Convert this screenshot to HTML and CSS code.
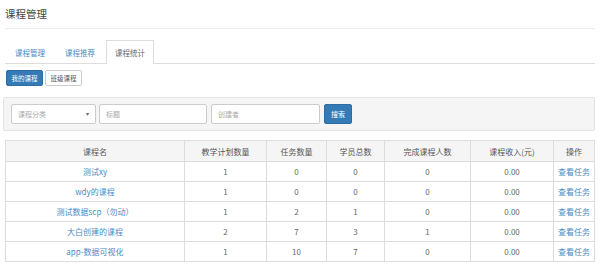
FILE: index.html
```html
<!DOCTYPE html>
<html lang="zh-CN">
<head>
    <meta charset="UTF-8">
    <title>课程管理</title>
    <link rel="stylesheet" href="styles.css">
</head>
<body>
    <div class="page-header">课程管理</div>

    <ul class="nav-tabs">
        <li><a href="#">课程管理</a></li>
        <li><a href="#">课程推荐</a></li>
        <li class="active"><a href="#">课程统计</a></li>
    </ul>

    <div class="btn-group">
        <a href="#" class="btn btn-primary">我的课程</a>
        <a href="#" class="btn">班级课程</a>
    </div>

    <div class="well">
        <div class="select">课程分类<span class="caret">▾</span></div>
        <div class="input input-title">标题</div>
        <div class="input input-creator">创建者</div>
        <button class="btn-search">搜索</button>
    </div>

    <table class="table">
        <thead>
            <tr>
                <th class="c-name">课程名</th>
                <th class="c-plan">教学计划数量</th>
                <th class="c-task">任务数量</th>
                <th class="c-stu">学员总数</th>
                <th class="c-done">完成课程人数</th>
                <th class="c-income">课程收入(元)</th>
                <th class="c-op">操作</th>
            </tr>
        </thead>
        <tbody>
            <tr><td><a href="#">测试xy</a></td><td>1</td><td>0</td><td>0</td><td>0</td><td>0.00</td><td><a href="#">查看任务</a></td></tr>
            <tr><td><a href="#">wdy的课程</a></td><td>1</td><td>0</td><td>0</td><td>0</td><td>0.00</td><td><a href="#">查看任务</a></td></tr>
            <tr><td><a href="#">测试数据scp（勿动）</a></td><td>1</td><td>2</td><td>1</td><td>0</td><td>0.00</td><td><a href="#">查看任务</a></td></tr>
            <tr><td><a href="#">大白创建的课程</a></td><td>2</td><td>7</td><td>3</td><td>1</td><td>0.00</td><td><a href="#">查看任务</a></td></tr>
            <tr><td><a href="#">app-数据可视化</a></td><td>1</td><td>10</td><td>7</td><td>0</td><td>0.00</td><td><a href="#">查看任务</a></td></tr>
        </tbody>
    </table>
</body>
</html>
```

FILE: styles.css
```css
body {
    margin: 0;
    padding: 0 5px 0 5px;
    background-color: #fff;
    color: #666;
    font-family: "Noto Sans CJK SC", "Liberation Sans", sans-serif;
    font-size: 8px;
}

a {
    color: #4a8bc4;
    text-decoration: none;
}

.page-header {
    height: 28px;
    line-height: 27px;
    font-size: 10.5px;
    color: #444;
    border-bottom: 1px solid #eee;
    margin: 0 0 11px 0;
}

.nav-tabs {
    display: flex;
    list-style: none;
    margin: 0;
    padding: 0 0 0 1px;
    border-bottom: 1px solid #ddd;
    height: 23px;
}

.nav-tabs li {
    margin-right: 2px;
}

.nav-tabs li a {
    display: block;
    height: 23px;
    line-height: 23px;
    padding: 0 8px;
    font-size: 7.5px;
    border: 1px solid transparent;
    border-bottom: none;
    box-sizing: border-box;
}

.nav-tabs li.active a {
    color: #666;
    background-color: #fff;
    border-color: #ddd;
    height: 24px;
}

.btn-group {
    display: flex;
    gap: 2px;
    margin: 6px 0 0 1px;
}

.btn {
    display: block;
    width: 37px;
    height: 16px;
    line-height: 14px;
    text-align: center;
    font-size: 6.5px;
    color: #555;
    border: 1px solid #ccc;
    border-radius: 2px;
    box-sizing: border-box;
    background-color: #fff;
}

.btn-primary {
    color: #fff;
    background-color: #337ab7;
    border-color: #2e6da4;
}

.well {
    display: flex;
    align-items: center;
    gap: 3px;
    margin: 11px 0 0 -2px;
    height: 34px;
    padding: 0 7px;
    background-color: #f5f5f5;
    border: 1px solid #e3e3e3;
    border-radius: 2px;
    box-sizing: border-box;
}

.select,
.input {
    height: 20px;
    line-height: 18px;
    padding: 0 6px;
    font-size: 7px;
    color: #aaa;
    background-color: #fff;
    border: 1px solid #ccc;
    border-radius: 2px;
    box-sizing: border-box;
}

.select {
    display: flex;
    justify-content: space-between;
    width: 85px;
}

.caret {
    color: #666;
    font-size: 6px;
}

.input-title {
    width: 108px;
}

.input-creator {
    width: 109px;
    margin-left: 1px;
}

.btn-search {
    width: 28px;
    height: 20px;
    padding: 0;
    font-family: inherit;
    font-size: 7px;
    color: #fff;
    background-color: #337ab7;
    border: 1px solid #2e6da4;
    border-radius: 2px;
    margin-left: 1px;
}

.table {
    width: 590px;
    margin-top: 9px;
    border-collapse: collapse;
    table-layout: fixed;
}

.table th,
.table td {
    height: 19px;
    padding: 0;
    text-align: center;
    font-weight: normal;
    border: 1px solid #ddd;
}

.table th {
    background-color: #f5f5f5;
    color: #555;
    height: 20px;
}

.c-name { width: 178px; }
.c-plan { width: 81px; }
.c-task { width: 59px; }
.c-stu { width: 57px; }
.c-done { width: 85px; }
.c-income { width: 82px; }
```
